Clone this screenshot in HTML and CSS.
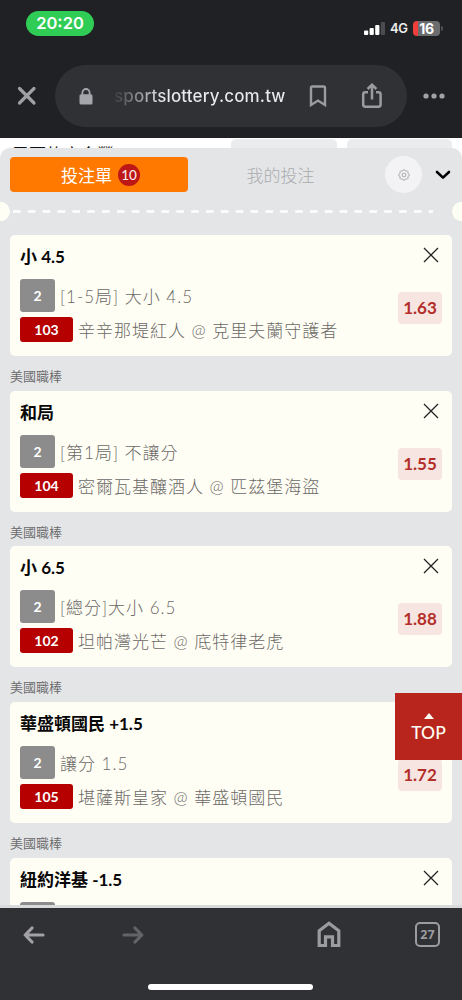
FILE: index.html
```html
<!DOCTYPE html>
<html lang="zh-Hant">
<head>
<meta charset="utf-8">
<meta name="viewport" content="width=device-width, initial-scale=1">
<title>投注單</title>
<link rel="stylesheet" href="styles.css">
</head>
<body>
<header class="browser-top">
  <div class="status">
    <span class="clock">20:20</span>
    <div class="signals">
      <svg class="bars" width="21" height="13" viewBox="0 0 21 13"><g fill="#fff"><rect x="0" y="8.5" width="4.2" height="4.5" rx="1"/><rect x="5.6" y="6" width="4.2" height="7" rx="1"/><rect x="11.2" y="3" width="4.2" height="10" rx="1"/></g><rect x="16.8" y="0" width="4.2" height="13" rx="1" fill="#4b4c4f"/></svg>
      <span class="network">4G</span>
      <span class="battery">16</span>
      <span class="battery-tip"></span>
    </div>
  </div>
  <div class="address-row">
    <svg class="close-tab" width="20" height="20" viewBox="0 0 20 20"><path d="M2.5 2.5 17 17M17 2.5 2.5 17" stroke="#9fa0a4" stroke-width="3.2" stroke-linecap="round"/></svg>
    <div class="address">
      <svg class="lock" width="14" height="17" viewBox="0 0 14 17"><path d="M3.4 7V4.6a3.6 3.6 0 0 1 7.2 0V7" fill="none" stroke="#a5a6ac" stroke-width="1.8"/><rect x=".5" y="6.2" width="13" height="10.3" rx="1.6" fill="#a5a6ac"/></svg>
      <span class="url">sportslottery.com.tw</span>
      <svg class="bookmark" width="18" height="22" viewBox="0 0 18 22"><path d="M2 20V2.8q0-1.3 1.3-1.3h11.4q1.3 0 1.3 1.3V20l-7-4.4z" fill="none" stroke="#9b9ca0" stroke-width="2.4" stroke-linejoin="miter"/></svg>
      <svg class="share" width="22" height="26" viewBox="0 0 22 26"><path d="M7 9.3H4.3Q2.2 9.3 2.2 11.4v10.2q0 2.1 2.1 2.1h13.2q2.1 0 2.1-2.1V11.4q0-2.1-2.1-2.1H15M11 16.5V2M6.6 6 11 1.7 15.4 6" fill="none" stroke="#9b9ca0" stroke-width="2.5"/></svg>
    </div>
    <svg class="more" width="22" height="6" viewBox="0 0 22 6"><g fill="#a2a3a7"><circle cx="3" cy="3" r="2.6"/><circle cx="11" cy="3" r="2.6"/><circle cx="19" cy="3" r="2.6"/></g></svg>
  </div>
</header>
<main class="page">
  <div class="behind"><span class="team">巴爾的摩金鶯</span><i class="slot"></i><i class="slot"></i></div>
  <section class="sheet">
    <div class="tabs">
      <div class="tab active">投注單<b class="count">10</b></div>
      <div class="tab">我的投注</div>
      <span class="settings"><svg width="12" height="12" viewBox="0 0 12 12" fill="none" stroke="#999" stroke-width=".8"><path d="M4.9 1.7 5.3.8h1.4l.4.9 1.1.5 1-.4 1 1-.4 1 .5 1.1.9.4v1.4l-.9.4-.5 1.1.4 1-1 1-1-.4-1.1.5-.4.9H5.3l-.4-.9-1.1-.5-1 .4-1-1 .4-1-.5-1.1-.9-.4V5.3l.9-.4.5-1.1-.4-1 1-1 1 .4z"/><circle cx="6" cy="6" r="1.9"/></svg></span>
      <svg class="chevron" width="16" height="10" viewBox="0 0 16 10"><path d="M2 2 8 7.6 14 2" fill="none" stroke="#000" stroke-width="2.6" stroke-linecap="round" stroke-linejoin="round"/></svg>
    </div>
    <div class="tear"><svg width="420" height="3" viewBox="0 0 420 3"><path d="M0 1.5H420" stroke="#fff" stroke-width="2.6" stroke-dasharray="7.6 7.25"/></svg></div>
    <div class="bets">
      <article class="bet">
        <div class="info"><h2>小 4.5</h2><p class="market"><b class="tag gray">2</b>[1-5局] 大小 4.5</p><p class="match"><b class="tag red">103</b>辛辛那堤紅人 @ 克里夫蘭守護者</p></div>
        <div class="side"><svg class="remove" width="16" height="16" viewBox="0 0 16 16"><path d="M1 1 15 15M15 1 1 15" stroke="#222" stroke-width="1.3"/></svg><span class="odds">1.63</span></div>
      </article>
      <div class="league">美國職棒</div>
      <article class="bet">
        <div class="info"><h2>和局</h2><p class="market"><b class="tag gray">2</b>[第1局] 不讓分</p><p class="match"><b class="tag red">104</b>密爾瓦基釀酒人 @ 匹茲堡海盜</p></div>
        <div class="side"><svg class="remove" width="16" height="16" viewBox="0 0 16 16"><path d="M1 1 15 15M15 1 1 15" stroke="#222" stroke-width="1.3"/></svg><span class="odds">1.55</span></div>
      </article>
      <div class="league">美國職棒</div>
      <article class="bet">
        <div class="info"><h2>小 6.5</h2><p class="market"><b class="tag gray">2</b>[總分]大小 6.5</p><p class="match"><b class="tag red">102</b>坦帕灣光芒 @ 底特律老虎</p></div>
        <div class="side"><svg class="remove" width="16" height="16" viewBox="0 0 16 16"><path d="M1 1 15 15M15 1 1 15" stroke="#222" stroke-width="1.3"/></svg><span class="odds">1.88</span></div>
      </article>
      <div class="league">美國職棒</div>
      <article class="bet">
        <div class="info"><h2>華盛頓國民 +1.5</h2><p class="market"><b class="tag gray">2</b>讓分 1.5</p><p class="match"><b class="tag red">105</b>堪薩斯皇家 @ 華盛頓國民</p></div>
        <div class="side"><svg class="remove" width="16" height="16" viewBox="0 0 16 16"><path d="M1 1 15 15M15 1 1 15" stroke="#222" stroke-width="1.3"/></svg><span class="odds">1.72</span></div>
      </article>
      <div class="league">美國職棒</div>
      <article class="bet">
        <div class="info"><h2>紐約洋基 -1.5</h2><p class="market"><b class="tag gray"></b></p></div>
        <div class="side"><svg class="remove" width="16" height="16" viewBox="0 0 16 16"><path d="M1 1 15 15M15 1 1 15" stroke="#222" stroke-width="1.3"/></svg></div>
      </article>
    </div>
  </section>
  <a class="to-top"><svg width="10" height="6" viewBox="0 0 10 6"><path d="M5 0 10 6H0z" fill="#fffef5"/></svg>TOP</a>
</main>
<nav class="browser-bottom">
  <div class="nav-icons">
    <svg class="back" width="22" height="18" viewBox="0 0 22 18"><path d="M20 9H2.5M9 2 2.2 9 9 16" fill="none" stroke="#a2a2a6" stroke-width="3.2" stroke-linecap="round" stroke-linejoin="round"/></svg>
    <svg class="forward" width="22" height="18" viewBox="0 0 22 18"><path d="M2 9h17.5M13 2l6.8 7L13 16" fill="none" stroke="#636468" stroke-width="3.2" stroke-linecap="round" stroke-linejoin="round"/></svg>
    <svg class="home" width="24" height="27" viewBox="0 0 24 27"><path d="M2.2 24.5V9.8L12 2.2l9.8 7.6v14.7h-6.3v-8.7h-7v8.7z" fill="none" stroke="#9b9ca0" stroke-width="3.2"/></svg>
    <span class="tab-count">27</span>
  </div>
  <div class="home-bar"></div>
</nav>
</body>
</html>
```
FILE: styles.css
```css
* { box-sizing: border-box; }
body {
  margin: 0;
  width: 462px;
  height: 1000px;
  overflow: hidden;
  display: flex;
  flex-direction: column;
  font-family: Lato, "Noto Sans CJK TC", sans-serif;
}
svg { display: block; flex: none; }
h2, p { margin: 0; font-weight: 400; }

.browser-top { height: 138px; flex: none; background: #202124; font-family: Inter, sans-serif; }
.status { height: 65px; padding: 11px 19px 0 26px; display: flex; justify-content: space-between; align-items: flex-start; }
.clock {
  width: 68px; height: 25px; border-radius: 13px; background: #30cd56; color: #fff;
  font-size: 16.5px; font-weight: 600; line-height: 25px; text-align: center;
}
.signals { display: flex; align-items: center; padding-top: 9px; height: 25px; }
.network { margin-left: 5px; width: 19px; font-size: 13px; font-weight: 600; color: #eee; letter-spacing: -.3px; }
.battery {
  margin-left: 4px; width: 27px; height: 15px; border-radius: 4px; color: #fff;
  background: linear-gradient(90deg, #ef3e3b 5px, #6b6c6e 5px);
  font-size: 14px; font-weight: 700; line-height: 15px; text-align: center; letter-spacing: -.4px;
}
.battery-tip { width: 2px; height: 5px; margin-left: 1px; border-radius: 0 2px 2px 0; background: #505154; }
.address-row { display: flex; align-items: center; height: 62px; padding-left: 17px; }
.address { margin-left: 18px; width: 352px; height: 62px; border-radius: 31px; background: #303134; display: flex; align-items: center; padding-left: 24px; }
.url {
  margin-left: 21px; width: 174px; font-size: 17px; font-weight: 500; letter-spacing: .15px; white-space: nowrap;
  background: linear-gradient(90deg, #3a3b3e 0, #eaeaed 50px); -webkit-background-clip: text; background-clip: text; color: transparent;
}
.bookmark { margin-left: 21px; }
.share { margin-left: 34px; }
.more { margin-left: 16px; }

.page { flex: 1; min-height: 0; position: relative; overflow: hidden; background: #fff; display: flex; flex-direction: column; }
.behind { height: 10px; flex: none; overflow: hidden; display: flex; padding: 1px 10px 0 12px; }
.team { width: 219px; flex: none; font-size: 17px; line-height: 25px; color: #111; padding-top: 3px; }
.slot { width: 106px; height: 20px; flex: none; border-radius: 5px; background: #ebeced; }
.slot + .slot { margin-left: 10px; width: 105px; }
.sheet { flex: 1; min-height: 0; background: #e4e5e7; border-radius: 10px 10px 0 0; overflow: hidden; border-bottom: 3px solid #d9dadc; }

.tabs { display: flex; align-items: center; padding: 8px 0 0 10px; }
.tab {
  width: 178px; height: 37px; display: flex; align-items: center; justify-content: center;
  font-family: "Noto Sans CJK TC", sans-serif; font-size: 17px; font-weight: 300; color: #aaabad; line-height: 35px;
  padding-bottom: 1px;
}
.tab:not(.active) { width: 185px; }
.tab.active { height: 35px; border-radius: 4px; background: #ff7800; color: #fff; font-weight: 400; padding: 0 0 0 3px; }
.count {
  margin-left: 6px; width: 22px; height: 22px; border-radius: 50%; background: #bd1717; color: #fbeaea;
  font: 500 13.5px/22px Lato, sans-serif; text-align: center;
}
.settings { margin-left: 12px; width: 37px; height: 37px; border-radius: 50%; background: #f3f3f5; display: flex; align-items: center; justify-content: center; }
.chevron { margin-left: 13px; }
.tear {
  height: 42px; padding: 17px 0 0 13px;
  background: radial-gradient(circle at 0 18.5px, #fffef5 9.5px, transparent 10px), radial-gradient(circle at 100% 18.5px, #fffef5 9.5px, transparent 10px);
}

.bets { padding: 0 10px; }
.bet { height: 121px; border-radius: 5px; background: #fffef5; display: flex; justify-content: space-between; padding: 12px 10px 0; }
.info h2 { height: 20px; font-size: 17px; line-height: 20px; font-weight: 700; color: #080808; white-space: nowrap; }
.market, .match { display: flex; align-items: center; color: #6b6966; font-size: 17px; font-weight: 300; letter-spacing: 1px; white-space: nowrap; }
.market { height: 33px; margin-top: 12px; }
.match { height: 25px; margin-top: 5px; }
.tag { border-radius: 3px; color: #fff; display: flex; align-items: center; justify-content: center; font-size: 14px; font-weight: 700; letter-spacing: 0; }
.gray { width: 35px; height: 33px; margin-right: 5px; background: #8c8c8c; }
.red { width: 53px; height: 25px; margin-right: 5px; background: #b60000; }
.side { display: flex; flex-direction: column; align-items: flex-end; }
.remove { margin-right: 3px; }
.odds { width: 44px; height: 32px; margin-top: 29px; border-radius: 4px; background: #f6e5e1; color: #b42e29; font-size: 17px; line-height: 32px; font-weight: 700; text-align: center; }
.league { height: 34.7px; font-size: 13px; line-height: 40px; color: #69696b; font-family: "Noto Sans CJK TC", sans-serif; font-weight: 350; }
.to-top {
  position: absolute; right: 0; top: 555px; width: 67px; height: 67px; background: #b7251d; color: #fffef5;
  display: flex; flex-direction: column; align-items: center; padding-top: 20px; font-size: 17.5px; line-height: 28px; font-weight: 500;
}

.browser-bottom { height: 92px; flex: none; background: #303134; }
.nav-icons { display: flex; align-items: center; padding: 13px 0 0 23px; }
.forward { margin-left: 77px; }
.home { margin-left: 173px; }
.tab-count {
  margin-left: 74px; width: 25px; height: 25px; border: 2px solid #9b9ca0; border-radius: 5px; color: #9b9ca0;
  font: 700 12.5px/21px "Open Sans", sans-serif; text-align: center;
}
.home-bar { width: 165px; height: 6px; margin: 36px 0 0 148px; border-radius: 3px; background: #fff; }
```
